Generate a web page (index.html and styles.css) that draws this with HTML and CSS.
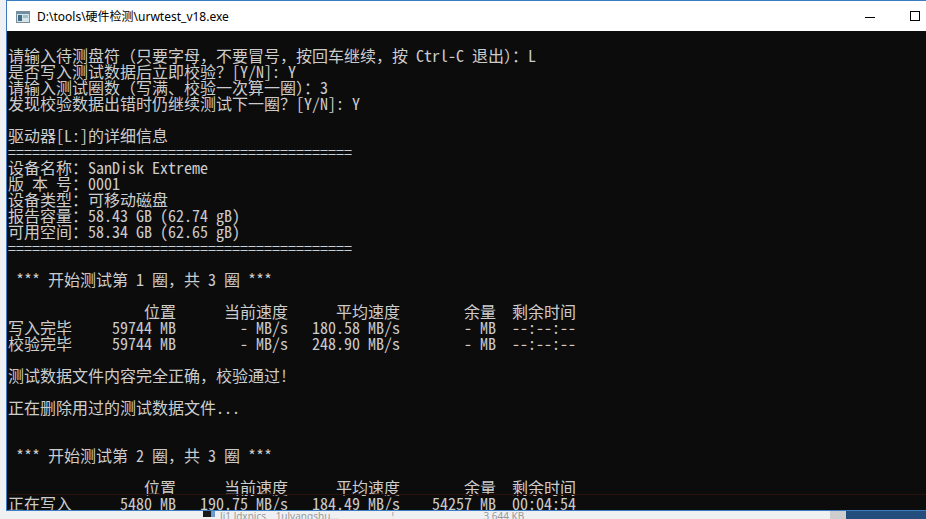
FILE: index.html
```html
<!DOCTYPE html>
<html lang="zh-CN">
<head>
    <meta charset="UTF-8">
    <title>urwtest_v18</title>
    <link rel="stylesheet" href="styles.css">
</head>
<body>
    <section class="window">
        <div class="title_bar">
            <svg class="app_icon" width="14" height="14" viewBox="0 0 14 14">
                <rect x="0.5" y="1.5" width="13" height="11" fill="#d6e4ea" stroke="#7b8e9c"/>
                <rect x="1" y="2" width="12" height="2" fill="#6f8ea6"/>
                <rect x="2" y="5" width="4" height="6" fill="#3f6d86"/>
                <rect x="7" y="5" width="5" height="3" fill="#9fbfca"/>
            </svg>
            <span class="title_text">D:\tools\硬件检测\urwtest_v18.exe</span>
            <span class="caption_buttons">
                <span class="btn_min"></span>
                <span class="btn_max"></span>
            </span>
        </div>

        <pre class="console">

请输入待测盘符（只要字母，不要冒号，按回车继续，按 Ctrl-C 退出）：L
是否写入测试数据后立即校验？[Y/N]: Y
请输入测试圈数（写满、校验一次算一圈）：3
发现校验数据出错时仍继续测试下一圈？[Y/N]: Y

驱动器[L:]的详细信息
===========================================
设备名称：SanDisk Extreme
版 本 号：0001
设备类型：可移动磁盘
报告容量：58.43 GB (62.74 gB)
可用空间：58.34 GB (62.65 gB)
===========================================

 *** 开始测试第 1 圈，共 3 圈 ***

                 位置      当前速度      平均速度        余量  剩余时间
写入完毕     59744 MB        - MB/s   180.58 MB/s        - MB  --:--:--
校验完毕     59744 MB        - MB/s   248.90 MB/s        - MB  --:--:--

测试数据文件内容完全正确，校验通过!

正在删除用过的测试数据文件...


 *** 开始测试第 2 圈，共 3 圈 ***

                 位置      当前速度      平均速度        余量  剩余时间
<span class="current_line">正在写入      5480 MB   190.75 MB/s   184.49 MB/s    54257 MB  00:04:54</span></pre>
    </section>

    <div class="behind">
        <span class="behind_icon"></span>
        <span class="behind_name">Ji1 ldxnjcs _ 1ulyangshu...</span>
        <span class="behind_sep">¦</span>
        <span class="behind_size">3 644 KB</span>
        <span class="behind_gap"></span>
        <span class="behind_scroll"></span>
        <span class="behind_task"></span>
    </div>
</body>
</html>
```

FILE: styles.css
```css
* {
    margin: 0;
    padding: 0;
    box-sizing: border-box;
}

body {
    width: 926px;
    height: 519px;
    overflow: hidden;
    background: #eef0f2;
}

.window {
    width: 960px;
    margin-left: 6px;
    border-left: 1px solid #3b7cc0;
    border-top: 1px solid #3b7cc0;
    border-bottom: 1px solid #3b7cc0;
    background: #ffffff;
}

.title_bar {
    height: 30px;
    display: flex;
    align-items: center;
    padding-left: 9px;
    background: #ffffff;
}

.app_icon {
    flex: none;
    margin-top: 1px;
}

.title_text {
    margin-left: 7px;
    font-family: "Noto Sans", "Noto Sans CJK SC", sans-serif;
    font-size: 12px;
    color: #000000;
}

.caption_buttons {
    display: flex;
    align-items: center;
    margin-left: auto;
    width: 105px;
    height: 100%;
}

.btn_min {
    width: 10px;
    height: 1px;
    margin-left: 4px;
    margin-top: 2px;
    background: #000000;
}

.btn_max {
    width: 10px;
    height: 10px;
    margin-left: 35px;
    border: 1px solid #000000;
}

.console {
    height: 479px;
    overflow: hidden;
    padding-left: 1px;
    background: #0c0c0c;
    color: #cccccc;
    font-family: "Noto Sans Mono CJK SC", "Noto Sans Mono CJK JP", "Noto Sans CJK SC", monospace;
    font-size: 16px;
    line-height: 16px;
    white-space: pre;
}

.current_line {
    display: inline-block;
    width: 100%;
    height: 16px;
    border-top: 1px solid #2a120a;
    margin-top: -1px;
}

.behind {
    display: flex;
    align-items: flex-start;
    height: 8px;
    font-family: "Noto Sans", sans-serif;
    font-size: 10px;
    line-height: 10px;
    color: #9a9a9a;
    overflow: hidden;
}

.behind_icon {
    width: 12px;
    height: 6px;
    margin-left: 203px;
    background: #1a1a1a;
    border-right: 4px solid #6a9ad0;
}

.behind_name {
    margin-left: 5px;
    width: 150px;
    overflow: hidden;
    white-space: nowrap;
}

.behind_sep {
    margin-left: 20px;
}

.behind_size {
    margin-left: 88px;
}

.behind_gap {
    flex: 1;
}

.behind_scroll {
    width: 16px;
    height: 8px;
    background: #cdcdcd;
}

.behind_task {
    width: 80px;
    height: 8px;
    background: #234d7c;
}
```
